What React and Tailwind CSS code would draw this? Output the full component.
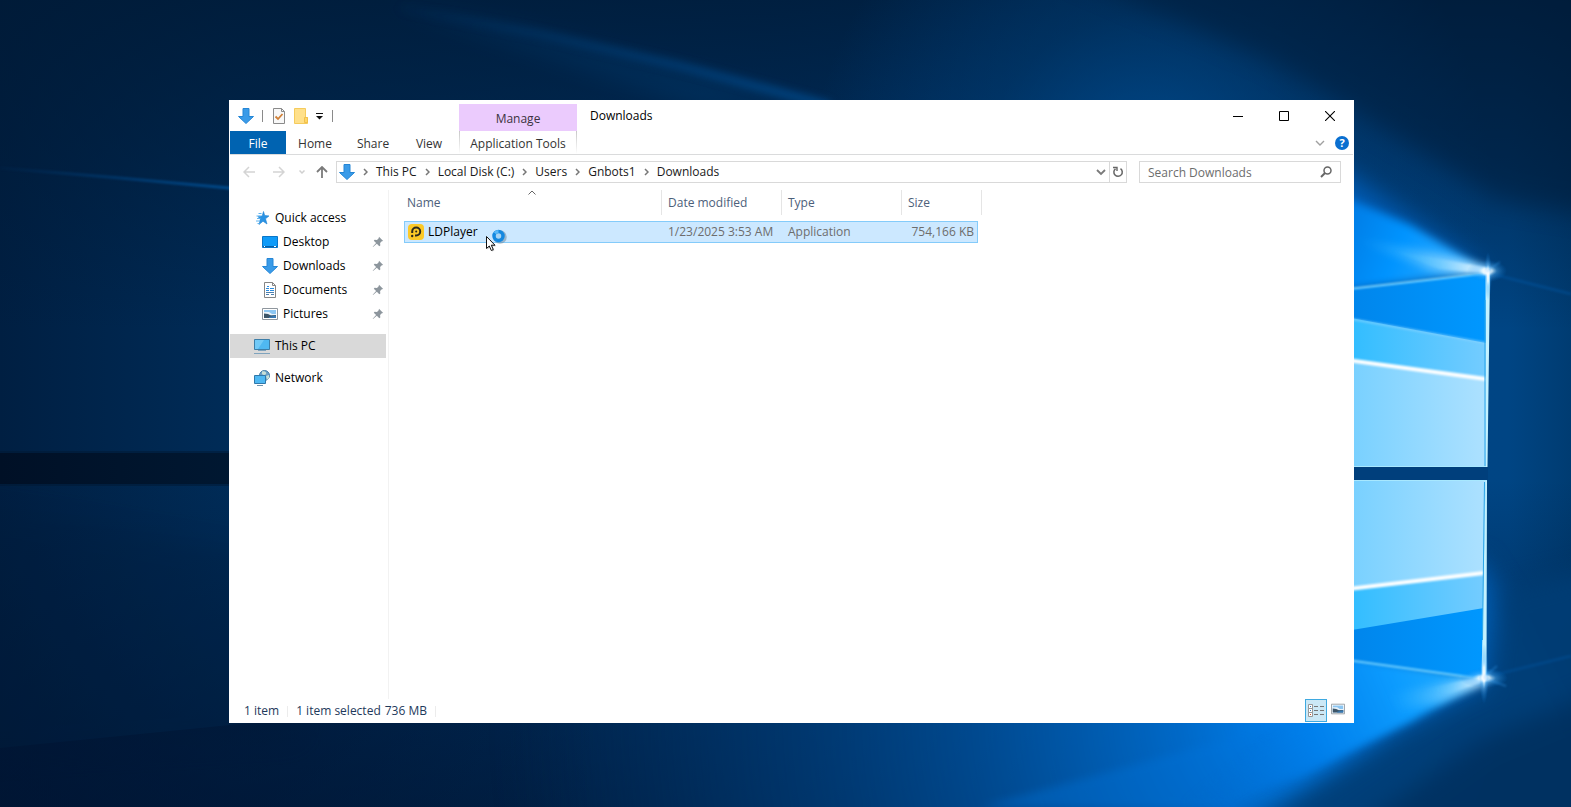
import React from "react";

function Wallpaper() {
  return (
    <svg
      className="absolute inset-0 h-full w-full"
      viewBox="0 0 1571 807"
      preserveAspectRatio="none"
      colorInterpolationFilters="sRGB"
      aria-hidden="true"
    >
      <defs>
        <linearGradient id="base" x1="0" x2="1" y1="0" y2="0">
          <stop offset="0" stopColor="#001f42" />
          <stop offset="0.15" stopColor="#002c58" />
          <stop offset="0.5" stopColor="#003469" />
          <stop offset="0.75" stopColor="#004384" />
          <stop offset="0.96" stopColor="#004584" />
          <stop offset="1" stopColor="#003c72" />
        </linearGradient>
        <linearGradient id="shadeTop" x1="0" x2="0" y1="0" y2="1">
          <stop offset="0" stopColor="#001a36" stopOpacity="0.8" />
          <stop offset="0.4" stopColor="#001a36" stopOpacity="0.5" />
          <stop offset="1" stopColor="#001a36" stopOpacity="0" />
        </linearGradient>
        <linearGradient id="shadeBottom" x1="0" x2="0" y1="0" y2="1">
          <stop offset="0" stopColor="#001430" stopOpacity="0" />
          <stop offset="1" stopColor="#001430" stopOpacity="0.6" />
        </linearGradient>
        <linearGradient id="fadeRight" x1="0" x2="1" y1="0" y2="0">
          <stop offset="0" stopColor="#001026" />
          <stop offset="1" stopColor="#001832" />
        </linearGradient>
        <linearGradient id="lowerLeft" x1="0" x2="1" y1="0" y2="0">
          <stop offset="0" stopColor="#001230" stopOpacity="0.5" />
          <stop offset="0.45" stopColor="#001230" stopOpacity="0.4" />
          <stop offset="1" stopColor="#001230" stopOpacity="0" />
        </linearGradient>
        <radialGradient id="topGlow" gradientUnits="userSpaceOnUse" cx="1150" cy="180" r="340">
          <stop offset="0" stopColor="#005098" stopOpacity="0.85" />
          <stop offset="0.5" stopColor="#004888" stopOpacity="0.35" />
          <stop offset="1" stopColor="#00509c" stopOpacity="0" />
        </radialGradient>
        <radialGradient id="bottomGlow" gradientUnits="userSpaceOnUse" cx="1300" cy="715" r="800">
          <stop offset="0" stopColor="#0084f4" />
          <stop offset="0.15" stopColor="#0070d4" stopOpacity="0.9" />
          <stop offset="0.4" stopColor="#0055a4" stopOpacity="0.75" />
          <stop offset="0.7" stopColor="#003f7c" stopOpacity="0.5" />
          <stop offset="1" stopColor="#003468" stopOpacity="0" />
        </radialGradient>
        <radialGradient id="flare">
          <stop offset="0" stopColor="#ffffff" />
          <stop offset="0.25" stopColor="#e0f6ff" stopOpacity="0.85" />
          <stop offset="0.5" stopColor="#60bcff" stopOpacity="0.4" />
          <stop offset="1" stopColor="#0080e8" stopOpacity="0" />
        </radialGradient>
        <linearGradient id="streak" x1="0" x2="1" y1="0" y2="0">
          <stop offset="0" stopColor="#20b0ff" stopOpacity="0" />
          <stop offset="0.5" stopColor="#70ccff" stopOpacity="0.6" />
          <stop offset="1" stopColor="#ffffff" />
        </linearGradient>
        <linearGradient id="faintLine" x1="0" x2="1" y1="0" y2="0">
          <stop offset="0" stopColor="#00529a" stopOpacity="0.05" />
          <stop offset="1" stopColor="#005caa" stopOpacity="0.7" />
        </linearGradient>
        <linearGradient id="beamUp" gradientUnits="userSpaceOnUse" x1="1320" y1="200" x2="1488" y2="272">
          <stop offset="0" stopColor="#0070d8" />
          <stop offset="0.5" stopColor="#0094ff" />
          <stop offset="1" stopColor="#40b4ff" />
        </linearGradient>
        <linearGradient id="beamDown" gradientUnits="userSpaceOnUse" x1="1180" y1="807" x2="1484" y2="680">
          <stop offset="0" stopColor="#0064c4" stopOpacity="0" />
          <stop offset="0.45" stopColor="#0080ec" stopOpacity="0.9" />
          <stop offset="0.75" stopColor="#0c9cff" />
          <stop offset="1" stopColor="#28b0ff" />
        </linearGradient>
        <linearGradient id="pale" x1="0" x2="1" y1="0" y2="0">
          <stop offset="0" stopColor="#74cfff" />
          <stop offset="1" stopColor="#ade1ff" />
        </linearGradient>
        <linearGradient id="mid" x1="0" x2="1" y1="0" y2="0">
          <stop offset="0" stopColor="#2cbcff" />
          <stop offset="1" stopColor="#74ccff" />
        </linearGradient>
        <linearGradient id="deep" x1="0" x2="1" y1="0" y2="0">
          <stop offset="0" stopColor="#0084ea" />
          <stop offset="1" stopColor="#0098ff" />
        </linearGradient>
        <filter id="b1" filterUnits="userSpaceOnUse" x="-100" y="-100" width="1800" height="1100"><feGaussianBlur stdDeviation="1" /></filter>
        <filter id="b4" filterUnits="userSpaceOnUse" x="-100" y="-100" width="1800" height="1100"><feGaussianBlur stdDeviation="4" /></filter>
        <filter id="b12" filterUnits="userSpaceOnUse" x="-100" y="-100" width="1800" height="1100"><feGaussianBlur stdDeviation="12" /></filter>
      </defs>

      <rect width="1571" height="807" fill="url(#base)" />
      <rect width="1571" height="330" fill="url(#shadeTop)" />
      <rect y="480" width="1571" height="327" fill="url(#shadeBottom)" />
      <rect width="1571" height="807" fill="url(#topGlow)" />
      <path d="M1060 -30H1620V220L1500 200L1270 60Z" fill="#001a36" opacity="0.5" filter="url(#b12)" />

      <path d="M380 0L520 30L830 108L700 108L560 60Z" fill="#004680" opacity="0.3" filter="url(#b12)" />
      <path d="M400 8L540 34L680 66L830 106" stroke="url(#faintLine)" strokeWidth="7" fill="none" filter="url(#b4)" />
      <path d="M0 168L120 178L240 189" stroke="url(#faintLine)" strokeWidth="3" fill="none" filter="url(#b1)" />
      <rect y="451" width="240" height="2" fill="#001832" opacity="0.5" />
      <rect y="453" width="240" height="31" fill="url(#fadeRight)" />
      <rect y="484" width="240" height="2" fill="#001832" opacity="0.5" />
      <path d="M-30 500L300 560V740L-30 760Z" fill="#001a38" opacity="0.2" filter="url(#b12)" />

      <path d="M-40 560H1480L1620 780V860H-40Z" fill="url(#bottomGlow)" filter="url(#b12)" />
      <path d="M-20 750L240 724L600 700V830H-20Z" fill="url(#lowerLeft)" />
      <path d="M980 807L1290 722H1400L1230 807Z" fill="#0074dc" opacity="0.35" filter="url(#b4)" />
      <path d="M1486 684L1400 728L1240 830H1620V560L1500 590Z" fill="#003d75" opacity="0.95" filter="url(#b12)" />
      <path d="M1600 690L1480 740L1340 840H1620Z" fill="#002a54" opacity="0.6" filter="url(#b12)" />

      <path d="M1220 125L1345 172L1486 270L1340 300Z" fill="#0060bd" opacity="0.85" filter="url(#b12)" />
      <path d="M1300 178L1410 225L1488 271L1300 296Z" fill="url(#beamUp)" filter="url(#b4)" />
      <path d="M1350 238L1430 252L1488 268L1486 276L1430 270Z" fill="url(#streak)" opacity="0.9" filter="url(#b4)" />
      <path d="M1390 250L1488 268V273L1440 269Z" fill="url(#streak)" filter="url(#b1)" />
      <path d="M1335 655L1486 679L1410 722L1300 776L1180 807L1300 720Z" fill="url(#beamDown)" filter="url(#b4)" />
      <path d="M1385 694L1486 676V683L1440 703L1400 710Z" fill="url(#streak)" opacity="0.9" filter="url(#b4)" />
      <path d="M1420 690L1485 676V681L1450 693Z" fill="url(#streak)" filter="url(#b1)" />

      <path d="M1340 290L1487 273L1486 467H1340Z" fill="url(#deep)" />
      <path d="M1340 316L1486 343V380H1340Z" fill="url(#mid)" />
      <path d="M1340 359L1486 379V467H1340Z" fill="url(#pale)" />
      <path d="M1340 317L1486 343" stroke="#8ad4ff" strokeWidth="2" opacity="0.7" filter="url(#b1)" />
      <path d="M1340 359L1486 379" stroke="#ffffff" strokeWidth="4" filter="url(#b1)" />
      <path d="M1340 290L1487 273" stroke="#7cd4ff" strokeWidth="2" filter="url(#b1)" />

      <path d="M1340 480H1486L1484 679L1340 659Z" fill="url(#deep)" />
      <path d="M1340 570H1484V608L1340 632Z" fill="url(#mid)" />
      <path d="M1340 480H1486L1484 573L1340 590Z" fill="url(#pale)" />
      <path d="M1340 590L1484 573" stroke="#ffffff" strokeWidth="4" filter="url(#b1)" />
      <path d="M1340 659L1483 679" stroke="#70d0ff" strokeWidth="2" filter="url(#b1)" />

      <rect x="1340" y="467" width="148" height="13" fill="#003f7c" />
      <path d="M1340 466.500H1487M1340 480.500H1487" stroke="#a8e8ff" strokeWidth="1" />
      <path d="M1485.500 275L1490 273L1487.500 467H1486ZM1485.500 481H1487L1486.500 680H1481.500Z" fill="#c4f2ff" />
      <path d="M1485 300V466M1484.500 482L1482.500 640" stroke="#28a4e8" strokeWidth="1" />

      <ellipse cx="1487" cy="271" rx="20" ry="11" fill="url(#flare)" />
      <ellipse cx="1488" cy="276" rx="4" ry="24" fill="url(#flare)" />
      <ellipse cx="1484" cy="678" rx="24" ry="10" fill="url(#flare)" />
      <ellipse cx="1484" cy="674" rx="5" ry="30" fill="url(#flare)" />
      <circle cx="1487" cy="272" r="3" fill="#ffffff" filter="url(#b1)" />
      <circle cx="1484" cy="678" r="3" fill="#ffffff" filter="url(#b1)" />
      <path d="M1486 272L1500 262M1484 677L1497 666M1484 678L1506 686" stroke="#3ca8ff" strokeWidth="2" opacity="0.3" filter="url(#b1)" />
      <path d="M1492 274L1571 294" stroke="#0060b4" strokeWidth="3" opacity="0.3" filter="url(#b1)" />
      <path d="M1490 676L1571 656" stroke="#0060b4" strokeWidth="3" opacity="0.25" filter="url(#b1)" />
    </svg>
  );
}

function DownArrow() {
  return (
    <svg className="size-4 shrink-0" viewBox="0 0 16 16" aria-hidden="true">
      <path d="M5 .5h6v8h4.500L8 15.500.5 8.500H5z" fill="#3a9be8" stroke="#2586d6" />
    </svg>
  );
}

function CheckPageIcon() {
  return (
    <svg className="size-4" viewBox="0 0 16 16" aria-hidden="true">
      <path d="M2.500.5h8l3 3v12h-11z" fill="#f8f8f8" stroke="#8a8a8a" />
      <path d="M10.500.5v3h3" fill="none" stroke="#8a8a8a" />
      <path d="M4.500 8.500l2.500 2.500 4.500-5" fill="none" stroke="#d08038" strokeWidth="1.800" />
    </svg>
  );
}

function FolderIcon() {
  return (
    <svg className="size-4" viewBox="0 0 16 16" aria-hidden="true">
      <path d="M1.500.5h11v9h2v6h-13z" fill="#ffe08a" stroke="#f5cb5c" />
      <path d="M11.500 9.500h3v5h-3z" fill="#ffd667" stroke="#f0c04c" />
    </svg>
  );
}

function StarIcon() {
  return (
    <svg className="size-4 shrink-0" viewBox="0 0 16 16" aria-hidden="true">
      <path d="M9.500 1.500l1.200 4 4.300.4-3.500 2.900 1.500 5.200-4-2.800-4 3.300 1.300-5L4 6.500l4.200-.6z" fill="#2a93e4" stroke="#1f82d2" strokeWidth=".6" />
      <path d="M4.500 3.500h3M2.500 6h4M3 8.500h3.500M2 11h4M3.500 13.500h2" stroke="#5fb4f0" />
    </svg>
  );
}

function DesktopIcon() {
  return (
    <svg className="size-4 shrink-0" viewBox="0 0 16 16" aria-hidden="true">
      <path d="M.5 2.500h15v11H.5z" fill="#0f9bf8" stroke="#0a76c8" />
      <path d="M1 12.500h14" stroke="#075fa6" />
      <path d="M2 12.500h1M12 12.500h2" stroke="#fff" />
    </svg>
  );
}

function DocumentIcon() {
  return (
    <svg className="size-4 shrink-0" viewBox="0 0 16 16" aria-hidden="true">
      <path d="M2.500.5h8l3 3v12h-11z" fill="#fff" stroke="#858585" />
      <path d="M10.500.5v3h3" fill="none" stroke="#858585" />
      <path d="M4 6.500h3M5 4.500h2M4 8.500h3M8 6.500h4M8 8.500h4" stroke="#2b8ce0" />
      <path d="M4 10.500h8M4 12.500h3M9 12.500h3" stroke="#4d7fae" />
    </svg>
  );
}

function PictureIcon({ className = "size-4" }) {
  return (
    <svg className={`${className} shrink-0`} viewBox="0 0 16 16" aria-hidden="true">
      <path d="M.5 2.500h15v11H.5z" fill="#fff" stroke="#8f979e" />
      <path d="M2 4h12v8H2z" fill="#8cc6f2" />
      <path d="M2 6h5l3 2h4v1H2z" fill="#e8f2fa" />
      <path d="M2 7.500l4 .5 3 1.500 5-.5v3H2z" fill="#3c5568" />
      <path d="M7 11l7-1.500V12H7z" fill="#3579b5" />
    </svg>
  );
}

function MonitorIcon() {
  return (
    <svg className="size-4 shrink-0" viewBox="0 0 16 16" aria-hidden="true">
      <path d="M.5 1.500h15v10H.5z" fill="#4fb8f2" stroke="#3d7ea8" />
      <path d="M1 2h9L4 11H1z" fill="#8bd6fa" opacity=".6" />
      <path d="M4 12.500h8M0 15.500h16" stroke="#7fa3bd" />
    </svg>
  );
}

function NetworkIcon() {
  return (
    <svg className="size-4 shrink-0" viewBox="0 0 16 16" aria-hidden="true">
      <circle cx="10.500" cy="5.500" r="5" fill="#6b9fc4" stroke="#457fa8" />
      <path d="M8 1.500c3-1 5 1 4 2.500s-3 1-4 0zM12 6l3-1v3l-2 2z" fill="#c8dfd6" />
      <path d="M.5 5.500h11v8H.5z" fill="#4fb8f2" stroke="#2f78aa" />
      <path d="M3 15.500h6" stroke="#6f93ac" />
    </svg>
  );
}

function PinIcon() {
  return (
    <svg className="ml-auto size-3 shrink-0" viewBox="0 0 12 12" aria-hidden="true">
      <path d="M7 .8L11.200 5l-1.400.3-1.700 1.800.2 2.400-1 .7L4.800 7.700 1 11l-.3-.3 3.400-3.600L1.800 4.700l.8-1 2.400.2 1.700-1.700z" fill="#8d969d" />
    </svg>
  );
}

function PlayerIcon() {
  return (
    <svg className="size-4 shrink-0" viewBox="0 0 16 16" aria-hidden="true">
      <rect width="16" height="16" rx="4" fill="#fcc927" />
      <path d="M4.200 9V7.500a4 4 0 1 1 4 4H7" fill="none" stroke="#2c2a1c" strokeWidth="2" />
      <circle cx="8.200" cy="7.500" r="1" fill="#2c2a1c" />
      <circle cx="4.200" cy="12" r="1.200" fill="#2c2a1c" />
    </svg>
  );
}

function Stroke({ d, w = 12, h = 12, color = "#6d6d6d", width = 1.5 }) {
  return (
    <svg width={w} height={h} viewBox={`0 0 ${w} ${h}`} className="shrink-0" aria-hidden="true">
      <path d={d} fill="none" stroke={color} strokeWidth={width} />
    </svg>
  );
}

function TitleBar() {
  return (
    <div className="flex h-[31px]">
      <div className="flex w-[229px] items-center gap-2 pl-2">
        <DownArrow />
        <span className="h-3 w-px bg-[#8a8a8a]" />
        <button aria-label="Properties"><CheckPageIcon /></button>
        <button aria-label="New folder" className="-ml-[2px]"><FolderIcon /></button>
        <button aria-label="Customize toolbar" className="-ml-px">
          <svg className="h-2 w-2" viewBox="0 0 8 8" aria-hidden="true">
            <path d="M0 1.500h7" stroke="#111" />
            <path d="M0 4h7L3.500 7.500z" fill="#111" />
          </svg>
        </button>
        <span className="h-3 w-px bg-[#8a8a8a]" />
      </div>
      <div className="mt-1 flex w-[118px] items-center justify-center bg-[#ebcbfd] pt-[2px] text-[#3b3340]">Manage</div>
      <h1 className="flex items-center pl-[13px] text-black">Downloads</h1>
      <div className="ml-auto flex">
        <button aria-label="Minimize" className="flex w-[46px] items-center justify-center">
          <Stroke d="M0 5.500h10" w={10} h={10} color="#000" width={1} />
        </button>
        <button aria-label="Maximize" className="flex w-[46px] items-center justify-center">
          <Stroke d="M.5.5h9v9h-9z" w={10} h={10} color="#000" width={1} />
        </button>
        <button aria-label="Close" className="flex w-[46px] items-center justify-center">
          <Stroke d="M0 0l10 10M10 0L0 10" w={10} h={10} color="#000" width={1.1} />
        </button>
      </div>
    </div>
  );
}

function RibbonTabs() {
  return (
    <div className="flex h-6 border-b border-[#dadbdc] text-[#333]">
      <div className="flex w-[229px]">
        <button className="w-14 bg-[#0063b1] pt-[2px] text-white">File</button>
        <button className="w-[58px] pt-[2px]">Home</button>
        <button className="w-[58px] pt-[2px]">Share</button>
        <button className="w-[54px] pt-[2px]">View</button>
      </div>
      <div className="flex w-[118px]">
        <span className="w-px bg-linear-to-b from-[#c8c8c8] to-white" />
        <button className="flex-1 whitespace-nowrap pt-[2px]">Application Tools</button>
        <span className="w-px bg-linear-to-b from-[#c8c8c8] to-white" />
      </div>
      <div className="ml-auto flex items-center gap-[10px] pr-1">
        <button aria-label="Expand the ribbon">
          <Stroke d="M1 2l4 4 4-4" w={10} h={8} color="#a0a0a0" width={1.4} />
        </button>
        <button aria-label="Help" className="flex size-[14px] items-center justify-center rounded-full bg-[#0a6fd0] text-[11px] font-bold leading-[14px] text-white">
          ?
        </button>
      </div>
    </div>
  );
}

const crumbs = ["This PC", "Local Disk (C:)", "Users", "Gnbots1", "Downloads"];

function AddressRow() {
  return (
    <div className="flex pt-[6px] pb-[7px] pl-1 pr-3">
      <button aria-label="Back" className="flex w-[30px] items-center justify-center">
        <Stroke d="M12 6H1M6 1L1 6l5 5" color="#d4d4d4" />
      </button>
      <button aria-label="Forward" className="flex w-[30px] items-center justify-center">
        <Stroke d="M0 6h11M6 1l5 5-5 5" color="#d4d4d4" />
      </button>
      <button aria-label="Recent locations" className="flex w-4 items-center justify-center">
        <Stroke d="M.5 1.500l2.500 2.500 2.500-2.500" w={6} h={6} color="#d0d0d0" />
      </button>
      <button aria-label="Up" className="mr-[2px] flex w-6 items-center justify-center">
        <Stroke d="M6 12V1M1 6l5-5 5 5" color="#7a7a7a" width={1.8} />
      </button>
      <nav aria-label="Path" className="flex h-[22px] flex-1 items-center border border-[#d9d9d9] pl-[2px] text-[#191919]">
        <DownArrow />
        {crumbs.map((c) => (
          <React.Fragment key={c}>
            <span className="flex w-[21px] justify-center">
              <Stroke d="M1 1l3 3-3 3" w={5} h={8} color="#777" />
            </span>
            <a href="#path">{c}</a>
          </React.Fragment>
        ))}
        <button aria-label="Previous locations" className="ml-auto flex h-full w-[18px] items-center border-r border-[#d9d9d9] pl-1">
          <Stroke d="M1 2l4 4 4-4" w={10} h={8} color="#7a7a7a" width={1.8} />
        </button>
        <button aria-label="Refresh" className="flex h-full w-4 items-center justify-center">
          <svg className="size-3" viewBox="0 0 12 12" aria-hidden="true">
            <path d="M8.500 2.700A4.200 4.200 0 1 1 3.500 2.800" fill="none" stroke="#666" strokeWidth="1.500" />
            <path d="M1 1.500h4v3.500" fill="none" stroke="#666" strokeWidth="1.400" />
          </svg>
        </button>
      </nav>
      <div className="ml-3 flex h-[22px] w-[202px] items-center border border-[#d9d9d9] pl-2 pr-2">
        <input id="search" type="text" placeholder="Search Downloads" className="h-full min-w-0 flex-1 bg-transparent leading-5 outline-none placeholder:text-[#6d6d6d]" />
        <label htmlFor="search" aria-label="Search Downloads">
          <svg className="size-3" viewBox="0 0 12 12" aria-hidden="true">
            <circle cx="7.500" cy="4.500" r="3.500" fill="none" stroke="#666" strokeWidth="1.500" />
            <path d="M5 7L1 11" stroke="#666" strokeWidth="2" />
          </svg>
        </label>
      </div>
    </div>
  );
}

const pinned = [
  ["Desktop", DesktopIcon],
  ["Downloads", DownArrow],
  ["Documents", DocumentIcon],
  ["Pictures", PictureIcon],
];

function Sidebar() {
  return (
    <nav aria-label="Folders" className="w-[159px] shrink-0 border-r border-[#f2f2f2] pt-4 text-black">
      <a href="#quick" className="flex h-6 items-center gap-[5px] pl-6"><StarIcon />Quick access</a>
      {pinned.map(([name, Icon]) => (
        <a key={name} href="#folder" className="flex h-6 items-center gap-[5px] pl-8 pr-1">
          <Icon />
          {name}
          <PinIcon />
        </a>
      ))}
      <a href="#pc" className="mt-2 mr-[2px] flex h-6 items-center gap-[5px] bg-[#d9d9d9] pl-6"><MonitorIcon />This PC</a>
      <a href="#network" className="mt-2 flex h-6 items-center gap-[5px] pl-6"><NetworkIcon />Network</a>
    </nav>
  );
}

function BusyCursor() {
  return (
    <svg className="absolute left-20 top-1 h-7 w-8" viewBox="0 0 32 28" aria-hidden="true">
      <circle cx="15" cy="11" r="5" fill="none" stroke="#6a8498" strokeWidth="3.500" opacity=".5" />
      <circle cx="13.500" cy="10" r="4.500" fill="#a8d4f4" stroke="#1488e0" strokeWidth="3.500" />
      <path d="M10 7.200A4.500 4.500 0 0 1 13.500 5.500" fill="none" stroke="#58b8f8" strokeWidth="3" />
      <path d="M2.500 11.500v12l2.800-2.500 2 4.500 2-1-2-4.300h3.700z" fill="#555" opacity=".35" />
      <path d="M1.500 10.500v12l2.800-2.500 2 4.500 2-1-2-4.300H10z" fill="#fff" stroke="#111" />
    </svg>
  );
}

function FileTable() {
  return (
    <div className="flex-1 pl-[15px]">
      <table className="w-[578px] table-fixed border-collapse text-left">
        <thead>
          <tr className="text-[#4c607a]">
            <th className="w-[258px] p-0 pb-[6px] font-normal">
              <div className="relative flex h-[25px] items-center border-r border-[#e5e5e5] pl-[3px]">
                Name
                <svg className="absolute left-[124px] top-0 h-[5px] w-2" viewBox="0 0 8 5" aria-hidden="true">
                  <path d="M.5 4.500L4 1l3.500 3.500" fill="none" stroke="#666" />
                </svg>
              </div>
            </th>
            <th className="w-[120px] p-0 pb-[6px] font-normal">
              <div className="flex h-[25px] items-center border-r border-[#e5e5e5] pl-[6px]">Date modified</div>
            </th>
            <th className="w-[120px] p-0 pb-[6px] font-normal">
              <div className="flex h-[25px] items-center border-r border-[#e5e5e5] pl-[6px]">Type</div>
            </th>
            <th className="w-20 p-0 pb-[6px] font-normal">
              <div className="flex h-[25px] items-center border-r border-[#e5e5e5] pl-[6px]">Size</div>
            </th>
          </tr>
        </thead>
        <tbody>
          <tr className="text-[#6d6d6d]">
            <td className="p-0">
              <div className="relative flex h-[22px] items-center gap-1 border-y border-l border-[#84cbfa] bg-[#cce8ff] pl-[3px] text-black">
                <PlayerIcon />
                LDPlayer
                <BusyCursor />
              </div>
            </td>
            <td className="p-0">
              <div className="flex h-[22px] items-center whitespace-nowrap border-y border-[#84cbfa] bg-[#cce8ff] pl-[6px]">1/23/2025 3:53 AM</div>
            </td>
            <td className="p-0">
              <div className="flex h-[22px] items-center border-y border-[#84cbfa] bg-[#cce8ff] pl-[6px]">Application</div>
            </td>
            <td className="p-0">
              <div className="mr-1 flex h-[22px] items-center justify-end whitespace-nowrap border-y border-r border-[#84cbfa] bg-[#cce8ff] pr-[3px]">754,166 KB</div>
            </td>
          </tr>
        </tbody>
      </table>
    </div>
  );
}

function StatusBar() {
  return (
    <div className="flex h-6 items-center pl-[14px] pr-2 text-[#1e395b]">
      <span>1 item</span>
      <span className="mx-2 h-[11px] w-px bg-[#ececec]" />
      <span>1 item selected</span>
      <span className="ml-1">736 MB</span>
      <span className="ml-2 h-[11px] w-px bg-[#ececec]" />
      <button aria-label="Details view" className="ml-auto flex h-[23px] w-[22px] items-center justify-center self-start border border-[#3fa9e0] bg-[#cbe8f6]">
        <svg className="h-[14px] w-4" viewBox="0 0 16 14" aria-hidden="true">
          <path d="M.5.500h4v4h-4zM.5 4.500h4v4h-4zM.5 8.500h4v4h-4z" fill="#fff" stroke="#999" />
          <path d="M2 2.500h1M2 6.500h1" stroke="#2e7ab8" />
          <path d="M2 10.500h1" stroke="#c0522e" />
          <path d="M6 2.500h4M12 2.500h4M6 6.500h4M12 6.500h4M6 10.500h4M12 10.500h4" stroke="#777" />
        </svg>
      </button>
      <button aria-label="Large icons view" className="ml-1 self-start pt-[3px]">
        <PictureIcon className="h-[14px] w-[14px]" />
      </button>
    </div>
  );
}

export default function App() {
  return (
    <main className="relative isolate flex min-h-screen overflow-hidden bg-[#002750] pt-[100px] pr-[217px] pb-[84px] pl-[229px] font-['Open_Sans','Noto_Sans',sans-serif] text-[12px] leading-4">
      <Wallpaper />
      <section aria-label="Downloads" className="relative flex min-w-0 flex-1 flex-col bg-white px-px">
        <TitleBar />
        <RibbonTabs />
        <AddressRow />
        <div className="flex flex-1">
          <Sidebar />
          <FileTable />
        </div>
        <StatusBar />
      </section>
    </main>
  );
}
